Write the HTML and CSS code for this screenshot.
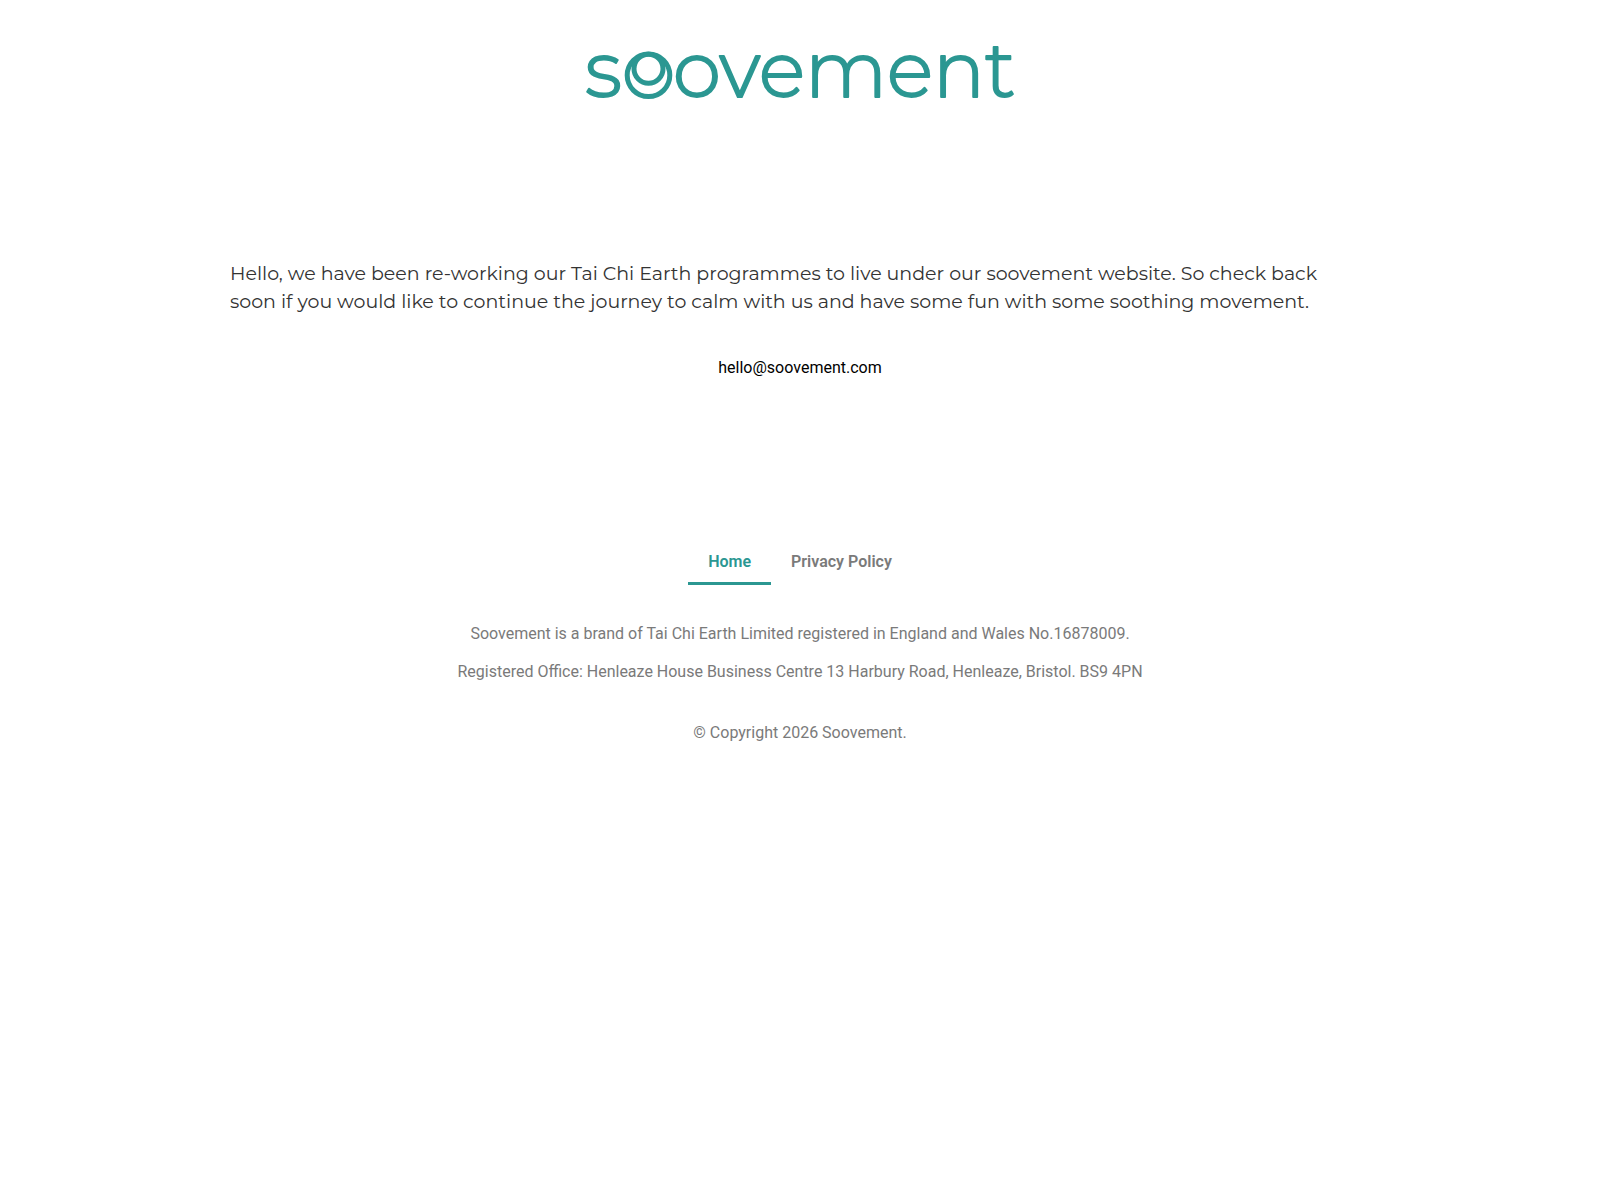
FILE: index.html
```
<!DOCTYPE html>
<html lang="en">
<head>
    <meta charset="UTF-8">
    <meta name="viewport" content="width=device-width, initial-scale=1.0">
    <title>Soovement</title>
    <link rel="stylesheet" href="styles.css">
</head>
<body>

<header class="site-header">
    <svg class="logo" viewBox="0 0 428 60" role="img" aria-label="soovement">
        <text x="-1" y="57">s</text>
        <!-- ring inside a ring, stands in for the first o -->
        <g class="logo-rings">
            <circle cx="62.5" cy="35.3" r="21.3"/>
            <circle cx="62.5" cy="28.7" r="14.5"/>
        </g>
        <text x="87" y="57">ovement</text>
    </svg>
</header>

<main class="content">
    <p class="intro">Hello, we have been re-working our Tai Chi Earth programmes to live under our soovement website. So check back soon if you would like to continue the journey to calm with us and have some fun with some soothing movement.</p>
    <a class="email" href="mailto:hello@soovement.com">hello@soovement.com</a>
</main>

<footer class="site-footer">
    <nav class="menu">
        <a class="menu-item active" href="#">Home</a>
        <a class="menu-item" href="#">Privacy Policy</a>
    </nav>
    <div class="company">
        <p>Soovement is a brand of Tai Chi Earth Limited registered in England and Wales No.16878009.</p>
        <p>Registered Office: Henleaze House Business Centre 13 Harbury Road, Henleaze, Bristol. BS9 4PN</p>
    </div>
    <p class="copyright">© Copyright 2026 Soovement.</p>
</footer>

</body>
</html>
```
FILE: styles.css
```
body {
    margin: 0;
    font-family: Roboto, sans-serif;
    font-size: 16px;
    line-height: 24px;
    color: #7a7a7a;
    background-color: #fff;
}

p {
    margin: 0;
}

a {
    text-decoration: none;
}

.site-header {
    display: flex;
    justify-content: center;
    padding: 40px 20px 0;
}

.logo {
    width: 428px;
    max-width: 100%;
    overflow: visible;
    fill: #2b9792;
    stroke: #2b9792;
    stroke-width: 2;
    stroke-linejoin: round;
    font-family: Montserrat, Lato, sans-serif;
    font-size: 77px;
    font-weight: 300;
}

.logo-rings {
    fill: none;
    stroke-width: 5;
}

.content {
    display: flex;
    flex-direction: column;
    align-items: center;
    gap: 40px;
    max-width: 1140px;
    margin: 0 auto;
    padding: 160px 20px;
}

.intro {
    padding-right: 20px;
    font-family: Montserrat, Inter, sans-serif;
    font-size: 19px;
    line-height: 28px;
    color: #333;
}

.email {
    color: #000;
}

.site-footer {
    display: flex;
    flex-direction: column;
    align-items: center;
    gap: 37px;
    padding: 0 20px 40px;
    text-align: center;
}

.menu {
    display: flex;
}

.menu-item {
    padding: 10px 20px 8px;
    border-bottom: 3px solid transparent;
    font-weight: 600;
    color: #7a7a7a;
}

.menu-item.active {
    border-color: #2b9792;
    color: #2b9792;
}

.company {
    display: grid;
    gap: 14px;
}
```
